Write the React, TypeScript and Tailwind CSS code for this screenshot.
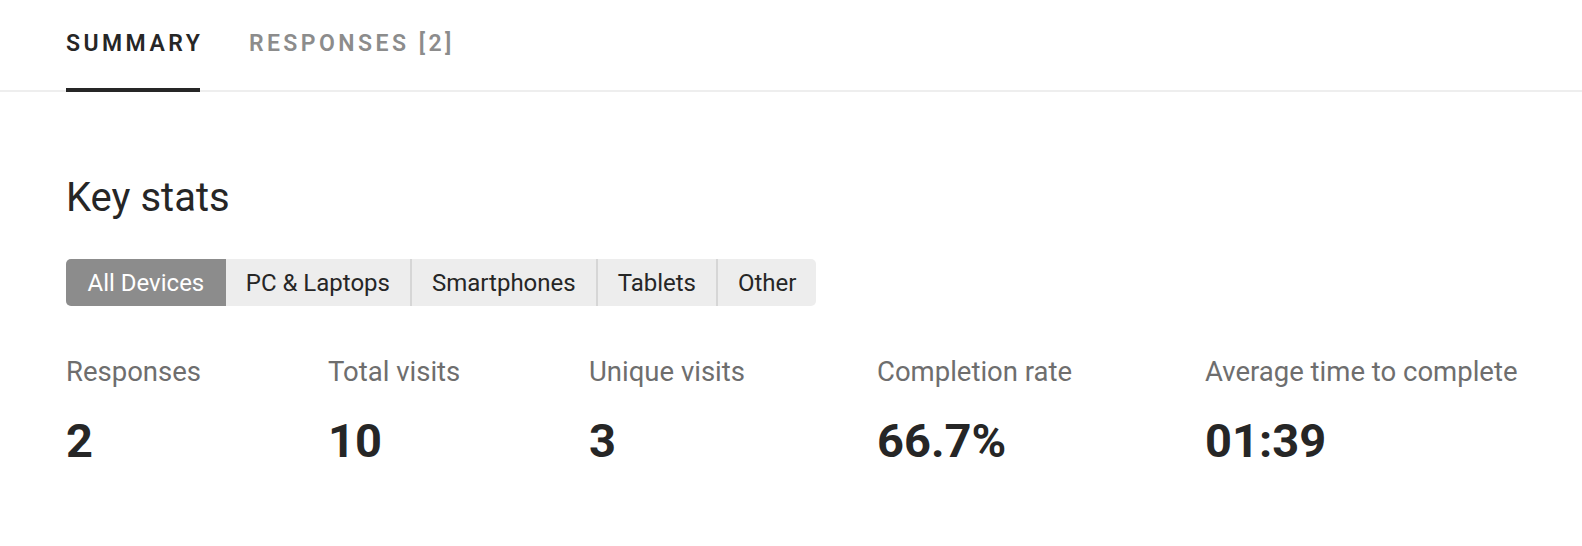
import React from 'react';

const devices = ['All Devices', 'PC & Laptops', 'Smartphones', 'Tablets', 'Other'];

const stats = [
  { label: 'Responses', value: '2', width: 'w-[262px]' },
  { label: 'Total visits', value: '10', width: 'w-[261px]' },
  { label: 'Unique visits', value: '3', width: 'w-[288px]' },
  { label: 'Completion rate', value: '66.7%', width: 'w-[328px]' },
  { label: 'Average time to complete', value: '01:39', width: '' },
];

export default function App() {
  return (
    <div className="min-h-[546px] bg-white text-[#262626]" style={{ fontFamily: 'Roboto, "Liberation Sans", sans-serif' }}>
      {/* Tabs */}
      <nav className="flex gap-[49px] px-[66px] border-b-2 border-[#eeeeee]">
        <button className="h-[92px] -mb-[2px] flex items-center border-b-4 border-[#262626] text-[23px] font-semibold tracking-[0.15em] text-[#262626]">
          <span className="-mr-[0.15em]">SUMMARY</span>
        </button>
        <button className="h-[92px] -mb-[2px] flex items-center border-b-4 border-transparent text-[23px] font-semibold tracking-[0.15em] text-[#8c8c8c]">
          <span className="-mr-[0.15em]">RESPONSES [2]</span>
        </button>
      </nav>

      <main className="px-[66px]">
        <h2 className="mt-[82px] text-[40px] leading-[48px] font-normal">Key stats</h2>

        {/* Device filter */}
        <div className="mt-[37px] inline-flex h-[47px] rounded-[5px] overflow-hidden bg-[#ededed]">
          {devices.map((d, i) => (
            <button
              key={d}
              className={
                i === 0
                  ? 'px-[21.5px] bg-[#8c8c8c] text-white text-[24px]'
                  : i === 1
                  ? 'px-5 text-[#262626] text-[24px]'
                  : 'px-5 border-l-2 border-[#d6d6d6] text-[#262626] text-[24px]'
              }
            >
              {d}
            </button>
          ))}
        </div>

        {/* Stats */}
        <div className="mt-[50px] flex">
          {stats.map((s) => (
            <div key={s.label} className={`${s.width} shrink-0 whitespace-nowrap`}>
              <div className="text-[27.5px] leading-[32px] text-[#6e6e6e]">{s.label}</div>
              <div className="mt-[25px] text-[47px] leading-[56px] font-bold">{s.value}</div>
            </div>
          ))}
        </div>
      </main>
    </div>
  );
}
